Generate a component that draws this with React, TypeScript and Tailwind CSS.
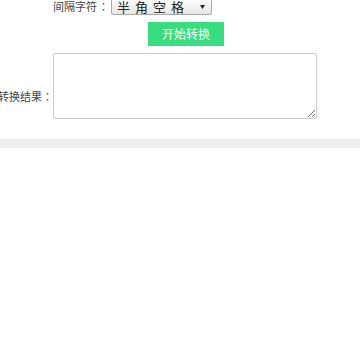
import React from 'react';

const App = () => {
    return (
        <div className="w-[360px] h-[360px] bg-white overflow-hidden text-[#444]" style={{ fontFamily: '"Noto Sans CJK SC", "Liberation Sans", sans-serif' }}>
            <div className="-mt-[2px]">
                {/* separator row */}
                <div className="flex items-center h-[17px] pl-[53px]">
                    <span className="text-[11px] w-[58px] shrink-0 whitespace-nowrap leading-none">
                        间隔字符<span className="ml-[1px]" style={{ fontFamily: '"Noto Sans CJK TC", sans-serif' }}>：</span>
                    </span>
                    <div className="flex items-center justify-between w-[101px] h-[17px] border border-[#aaa] rounded-[2px] bg-gradient-to-b from-white to-[#e6e6e6] pl-[5px] pr-[5px]">
                        <span className="text-[13px] tracking-[5px] leading-none text-[#222]">半角空格</span>
                        <svg width="5" height="4" viewBox="0 0 5 4" className="mr-[1px]">
                            <path d="M0 0 H5 L2.5 4 Z" fill="#222" />
                        </svg>
                    </div>
                </div>

                {/* convert button */}
                <div className="flex pl-[148px] mt-[7px]">
                    <button className="flex items-center justify-center w-[76px] h-[24px] bg-[#38dd7f] text-white text-[12px] leading-none">开始转换</button>
                </div>

                {/* result */}
                <div className="flex items-center mt-[7px]">
                    <div className="flex justify-end w-[53px] shrink-0 pt-[20px]">
                        <span className="text-[11px] whitespace-nowrap leading-none">
                            转换结果<span style={{ fontFamily: '"Noto Sans CJK TC", sans-serif' }}>：</span>
                        </span>
                    </div>
                    <textarea className="block w-[264px] h-[66px] border border-[#ccc] rounded-[2px] bg-white resize-y" />
                </div>
            </div>

            <div className="mt-[20px] h-[9px] bg-[#eeeeee]" />
        </div>
    );
};

export default App;
